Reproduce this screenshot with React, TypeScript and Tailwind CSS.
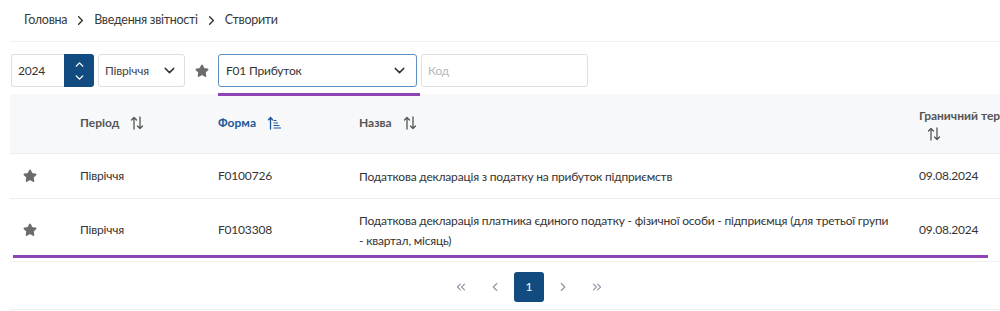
import React from 'react';
import { ChevronRight, ChevronDown, ChevronUp, ChevronLeft, ChevronsLeft, ChevronsRight, Star } from 'lucide-react';

const SortIcon = () => (
  <svg width="14" height="14" viewBox="0 0 14 14" fill="none" stroke="#555" strokeWidth="1.3" strokeLinecap="round" strokeLinejoin="round">
    <path d="M4 13V1.5M1.5 4L4 1.5 6.5 4" />
    <path d="M10 1v11.5M7.5 10l2.5 2.5 2.5-2.5" />
  </svg>
);

const SortAscIcon = () => (
  <svg width="14" height="14" viewBox="0 0 14 14" fill="none" stroke="#1d5a96" strokeWidth="1.3" strokeLinecap="round" strokeLinejoin="round">
    <path d="M3.5 13V1.5M1.5 3.8L3.5 1.5 5.5 3.8" />
    <path d="M7 4.5h2M7 7h3.5M7 9.5h5M7 12h6.5" strokeWidth="1.2" />
  </svg>
);

const rows = [
  { period: 'Півріччя', form: 'F0100726', name: 'Податкова декларація з податку на прибуток підприємств', date: '09.08.2024' },
  {
    period: 'Півріччя',
    form: 'F0103308',
    name: 'Податкова декларація платника єдиного податку - фізичної особи - підприємця (для третьої групи - квартал, місяць)',
    date: '09.08.2024',
  },
];

export default function App() {
  return (
    <div className="w-[1000px] h-[311px] overflow-hidden bg-white text-[12px] tracking-[-0.2px] text-[#333] font-['Lato','Noto_Sans',sans-serif] relative">
      {/* breadcrumb */}
      <div className="ml-[10px] h-[42px] flex items-center pl-[14px] gap-[6px] border-b border-[#eef0f2] text-[12.5px] tracking-[-0.3px] text-[#3a3a3a]">
        <span>Головна</span>
        <ChevronRight className="w-[15px] h-[15px] text-[#333]" strokeWidth={2.2} />
        <span>Введення звітності</span>
        <ChevronRight className="w-[15px] h-[15px] text-[#333]" strokeWidth={2.2} />
        <span>Створити</span>
      </div>

      {/* filters */}
      <div className="flex items-center h-[33px] mt-[12px] ml-[11px]">
        <div className="flex h-full">
          <div className="w-[53px] h-full border border-r-0 border-[#dcdfe3] rounded-l-[3px] flex items-center pl-[6px] text-[#333]">2024</div>
          <div className="w-[30px] h-full bg-[#124b80] rounded-r-[3px] flex flex-col items-center justify-center text-white">
            <ChevronUp className="w-[13px] h-[13px]" strokeWidth={2.5} />
            <ChevronDown className="w-[13px] h-[13px]" strokeWidth={2.5} />
          </div>
        </div>
        <div className="ml-[4px] w-[87px] h-full border border-[#dcdfe3] rounded-[3px] flex items-center justify-between pl-[6px] pr-[6px] text-[#444]">
          <span>Півріччя</span>
          <ChevronDown className="w-[17px] h-[17px] text-[#333]" strokeWidth={2} />
        </div>
        <div className="w-[33px] flex justify-center">
          <Star className="w-[14px] h-[14px] text-[#6b6b6b]" fill="#6b6b6b" />
        </div>
        <div className="w-[199px] h-full border border-[#5f8fc0] rounded-[3px] flex items-center justify-between pl-[7px] pr-[8px] text-[#333]">
          <span>F01 Прибуток</span>
          <ChevronDown className="w-[17px] h-[17px] text-[#333]" strokeWidth={2} />
        </div>
        <div className="ml-[4px] w-[167px] h-full border border-[#dcdfe3] rounded-[3px] flex items-center pl-[6px] text-[#b5b8bc]">Код</div>
      </div>

      {/* table */}
      <div className="ml-[10px] mt-[7px] w-[1150px]">
        <table className="table-fixed w-full border-collapse">
          <colgroup>
            <col className="w-[60px]" />
            <col className="w-[138px]" />
            <col className="w-[141px]" />
            <col className="w-[560px]" />
            <col />
          </colgroup>
          <thead>
            <tr className="bg-[#f7f8fa] h-[59px] border-b border-[#eceef0] text-left align-middle">
              <th />
              <th className="px-[10px] font-bold text-[#555] tracking-normal">
                <span className="inline-flex items-center gap-[11px]">Період <SortIcon /></span>
              </th>
              <th className="px-[10px] font-bold text-[#1d5a96] tracking-normal">
                <span className="inline-flex items-center gap-[11px]">Форма <SortAscIcon /></span>
              </th>
              <th className="px-[10px] font-bold text-[#555] tracking-normal">
                <span className="inline-flex items-center gap-[11px]">Назва <SortIcon /></span>
              </th>
              <th className="px-[10px] font-bold text-[#555] leading-[19px] tracking-normal">
                <div className="whitespace-nowrap">Граничний термін подання</div>
                <div className="pl-[8px] pt-[2px]"><SortIcon /></div>
              </th>
            </tr>
          </thead>
          <tbody>
            {rows.map((r, i) => (
              <tr key={r.form} className={i === 0 ? 'h-[45px] border-b border-[#eceef0]' : 'h-[63px]'}>
                <td className="pl-[13px]">
                  <Star className="w-[14px] h-[14px] text-[#6b6b6b]" fill="#6b6b6b" />
                </td>
                <td className="px-[10px]">{r.period}</td>
                <td className="px-[10px]">{r.form}</td>
                <td className="pl-[10px] pr-[16px] leading-[20px] pt-[2px]">{r.name}</td>
                <td className="px-[10px]">{r.date}</td>
              </tr>
            ))}
          </tbody>
        </table>
      </div>

      {/* pagination */}
      <div className="ml-[10px] h-[49px] border-t border-b border-[#eef0f2] flex items-center justify-center gap-[4px] pl-[48px] pt-[2px]">
        <button className="w-[30px] h-[30px] flex items-center justify-center text-[#8e99a5]"><ChevronsLeft className="w-[14px] h-[14px]" /></button>
        <button className="w-[30px] h-[30px] flex items-center justify-center text-[#8e99a5]"><ChevronLeft className="w-[14px] h-[14px]" /></button>
        <button className="w-[30px] h-[30px] rounded-[3px] bg-[#124b80] text-white flex items-center justify-center">1</button>
        <button className="w-[30px] h-[30px] flex items-center justify-center text-[#8e99a5]"><ChevronRight className="w-[14px] h-[14px]" /></button>
        <button className="w-[30px] h-[30px] flex items-center justify-center text-[#8e99a5]"><ChevronsRight className="w-[14px] h-[14px]" /></button>
      </div>

      {/* annotation lines */}
      <div className="absolute left-[218px] top-[93px] w-[202px] h-[3px] bg-[#8e44b4]" />
      <div className="absolute left-[13px] top-[255px] w-[975px] h-[3px] bg-[#8e44b4]" />
    </div>
  );
}
